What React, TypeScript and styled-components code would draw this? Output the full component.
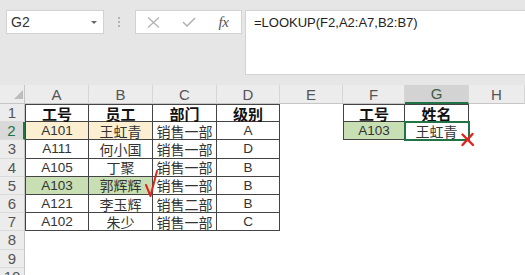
import React from 'react';
import styled, { createGlobalStyle } from 'styled-components';

const GlobalStyle = createGlobalStyle`
  html, body { margin: 0; padding: 0; background: #fff; }
  body { font-family: "Liberation Sans", "Noto Sans CJK SC", sans-serif; }
  * { box-sizing: border-box; }
`;

const Page = styled.div`
  position: relative;
  width: 525px;
  height: 275px;
  overflow: hidden;
  background: #fff;
  display: flex;
  flex-direction: column;
`;

const Toolbar = styled.div`
  height: 85px;
  flex-shrink: 0;
  background: #e6e6e6;
  display: flex;
  align-items: flex-start;
  padding: 10px 0 0 6px;
`;

const NameBox = styled.div`
  width: 98px;
  height: 24px;
  background: #fff;
  border: 1px solid #d2d2d2;
  display: flex;
  align-items: center;
  justify-content: space-between;
  padding: 0 6px 0 4px;
  font-size: 14px;
  color: #333;
`;

const Caret = styled.span`
  width: 0;
  height: 0;
  border-left: 3px solid transparent;
  border-right: 3px solid transparent;
  border-top: 3px solid #666;
`;

const Grip = styled.div`
  height: 24px;
  width: 2px;
  margin: 0 15px 0 14px;
  display: flex;
  flex-direction: column;
  justify-content: center;
  gap: 2px;
`;

const Dot = styled.span`
  width: 2px;
  height: 2px;
  background: #b4b4b4;
`;

const ButtonGroup = styled.div`
  width: 107px;
  height: 24px;
  background: #fff;
  border: 1px solid #d2d2d2;
  display: grid;
  grid-template-columns: repeat(3, 1fr);
  align-items: center;
  justify-items: center;
`;

const Fx = styled.span`
  font-family: "Liberation Serif", serif;
  font-style: italic;
  font-size: 15px;
  color: #555;
  letter-spacing: -0.5px;
`;

const FormulaBox = styled.div`
  flex: 1;
  height: 65px;
  margin-left: 3px;
  background: #fff;
  border: 1px solid #d2d2d2;
  border-right: none;
  padding: 3px 8px;
  font-size: 13px;
  line-height: 18px;
  color: #222;
`;

const Sheet = styled.div`
  display: grid;
  grid-template-columns: 25px 64px 64px 64px 63px 63px 62px 64px 1fr;
  grid-template-rows: 19px repeat(10, 18.2px);
`;

const Corner = styled.div`
  background: #ececec;
  border-right: 1px solid #c6c6c6;
  border-bottom: 1px solid #c6c6c6;
  display: flex;
  align-items: flex-end;
  justify-content: flex-end;
  padding: 0 1px 4px 0;
`;

const ColHeader = styled.div<{ $active?: boolean }>`
  background: ${(p) => (p.$active ? '#d3d3d3' : '#ececec')};
  border-right: 1px solid #d6d6d6;
  border-bottom: ${(p) => (p.$active ? '2px solid #217346' : '1px solid #c6c6c6')};
  display: flex;
  align-items: center;
  justify-content: center;
  font-size: 15px;
  color: ${(p) => (p.$active ? '#3d5c47' : '#555')};
`;

const RowHeader = styled.div<{ $active?: boolean }>`
  background: ${(p) => (p.$active ? '#d9d9d9' : '#ececec')};
  border-right: ${(p) => (p.$active ? '2px solid #217346' : '1px solid #c6c6c6')};
  border-bottom: 1px solid #dadada;
  display: flex;
  align-items: center;
  justify-content: center;
  font-size: 15px;
  color: ${(p) => (p.$active ? '#217346' : '#555')};
`;

type CellProps = {
  $bg?: string;
  $bold?: boolean;
  $boxed?: boolean;
  $edgeL?: boolean;
  $edgeT?: boolean;
  $selected?: boolean;
  $latin?: boolean;
};

const Cell = styled.div<CellProps>`
  position: relative;
  background: ${(p) => p.$bg || 'transparent'};
  display: flex;
  align-items: center;
  justify-content: center;
  white-space: nowrap;
  font-size: ${(p) => (p.$latin ? '13.5px' : p.$bold ? '15px' : '14px')};
  font-weight: ${(p) => (p.$bold ? 700 : 400)};
  color: ${(p) => (p.$bold ? '#111' : '#333')};
  border-right: ${(p) => (p.$boxed ? '1px solid #444' : 'none')};
  border-bottom: ${(p) => (p.$boxed ? '1px solid #444' : 'none')};
  border-left: ${(p) => (p.$edgeL ? '1px solid #444' : 'none')};
  border-top: ${(p) => (p.$edgeT ? '1px solid #444' : 'none')};
  ${(p) => (p.$selected ? 'outline: 2px solid #217346; outline-offset: -1px; z-index: 1;' : '')}
`;

const Mark = styled.svg<{ $x: number; $y: number }>`
  position: absolute;
  left: ${(p) => p.$x}px;
  top: ${(p) => p.$y}px;
  z-index: 3;
  overflow: visible;
`;

const YELLOW = '#fcefd1';
const GREEN = '#c7dfb3';

const columns = ['A', 'B', 'C', 'D', 'E', 'F', 'G', 'H'];

const mainTable = [
  ['工号', '员工', '部门', '级别'],
  ['A101', '王虹青', '销售一部', 'A'],
  ['A111', '何小国', '销售一部', 'D'],
  ['A105', '丁聚', '销售一部', 'B'],
  ['A103', '郭辉辉', '销售一部', 'B'],
  ['A121', '李玉辉', '销售二部', 'B'],
  ['A102', '朱少', '销售一部', 'C'],
];

const lookupTable = [
  ['工号', '姓名'],
  ['A103', '王虹青'],
];

type CellDef = CellProps & { text: string };

function cellAt(r: number, c: number): CellDef {
  if (r < 7 && c < 4) {
    let bg: string | undefined;
    if (r === 1 && c < 2) bg = YELLOW;
    if (r === 4 && c < 2) bg = GREEN;
    return { text: mainTable[r][c], $boxed: true, $edgeL: c === 0, $edgeT: r === 0, $bold: r === 0, $bg: bg };
  }
  if (r < 2 && (c === 5 || c === 6)) {
    return {
      text: lookupTable[r][c - 5],
      $boxed: true,
      $edgeL: c === 5,
      $edgeT: r === 0,
      $bold: r === 0,
      $bg: r === 1 && c === 5 ? GREEN : undefined,
      $selected: r === 1 && c === 6,
    };
  }
  return { text: '' };
}

export default function App() {
  const rows = Array.from({ length: 10 }, (_, i) => i);
  return (
    <>
      <GlobalStyle />
      <Page>
        <Toolbar>
          <NameBox>
            <span>G2</span>
            <Caret />
          </NameBox>
          <Grip>
            <Dot />
            <Dot />
            <Dot />
          </Grip>
          <ButtonGroup>
            <svg width="13" height="11" viewBox="0 0 13 11">
              <path d="M1 0.5 L12 10.5 M12 0.5 L1 10.5" stroke="#b0b0b0" strokeWidth="1.2" fill="none" />
            </svg>
            <svg width="14" height="10" viewBox="0 0 14 10">
              <path d="M1 5 L5 9 L13 1" stroke="#b0b0b0" strokeWidth="1.5" fill="none" />
            </svg>
            <Fx>fx</Fx>
          </ButtonGroup>
          <FormulaBox>=LOOKUP(F2,A2:A7,B2:B7)</FormulaBox>
        </Toolbar>
        <Sheet>
          <Corner>
            <svg width="9" height="9" viewBox="0 0 9 9">
              <path d="M9 0 L9 9 L0 9 Z" fill="#bdbdbd" />
            </svg>
          </Corner>
          {columns.map((c) => (
            <ColHeader key={c} $active={c === 'G'}>
              {c}
            </ColHeader>
          ))}
          {rows.map((r) => (
            <React.Fragment key={r}>
              <RowHeader $active={r === 1}>{r + 1}</RowHeader>
              {columns.map((_, c) => {
                const { text, ...props } = cellAt(r, c);
                return (
                  <Cell key={c} {...props} $latin={/^[\x00-\x7f]+$/.test(text)}>
                    {text}
                  </Cell>
                );
              })}
            </React.Fragment>
          ))}
        </Sheet>
        <Mark $x={145} $y={170} width="14" height="28" viewBox="0 0 14 28">
          <path d="M1 15 L5.5 26 L12 1" stroke="#e0231c" strokeWidth="2" fill="none" strokeLinejoin="round" strokeLinecap="round" />
        </Mark>
        <Mark $x={461} $y={133} width="13" height="13" viewBox="0 0 13 13">
          <path d="M1.5 1.5 L12 12 M11.5 1 L1.5 12" stroke="#e0231c" strokeWidth="2.4" fill="none" strokeLinecap="round" />
        </Mark>
      </Page>
    </>
  );
}
